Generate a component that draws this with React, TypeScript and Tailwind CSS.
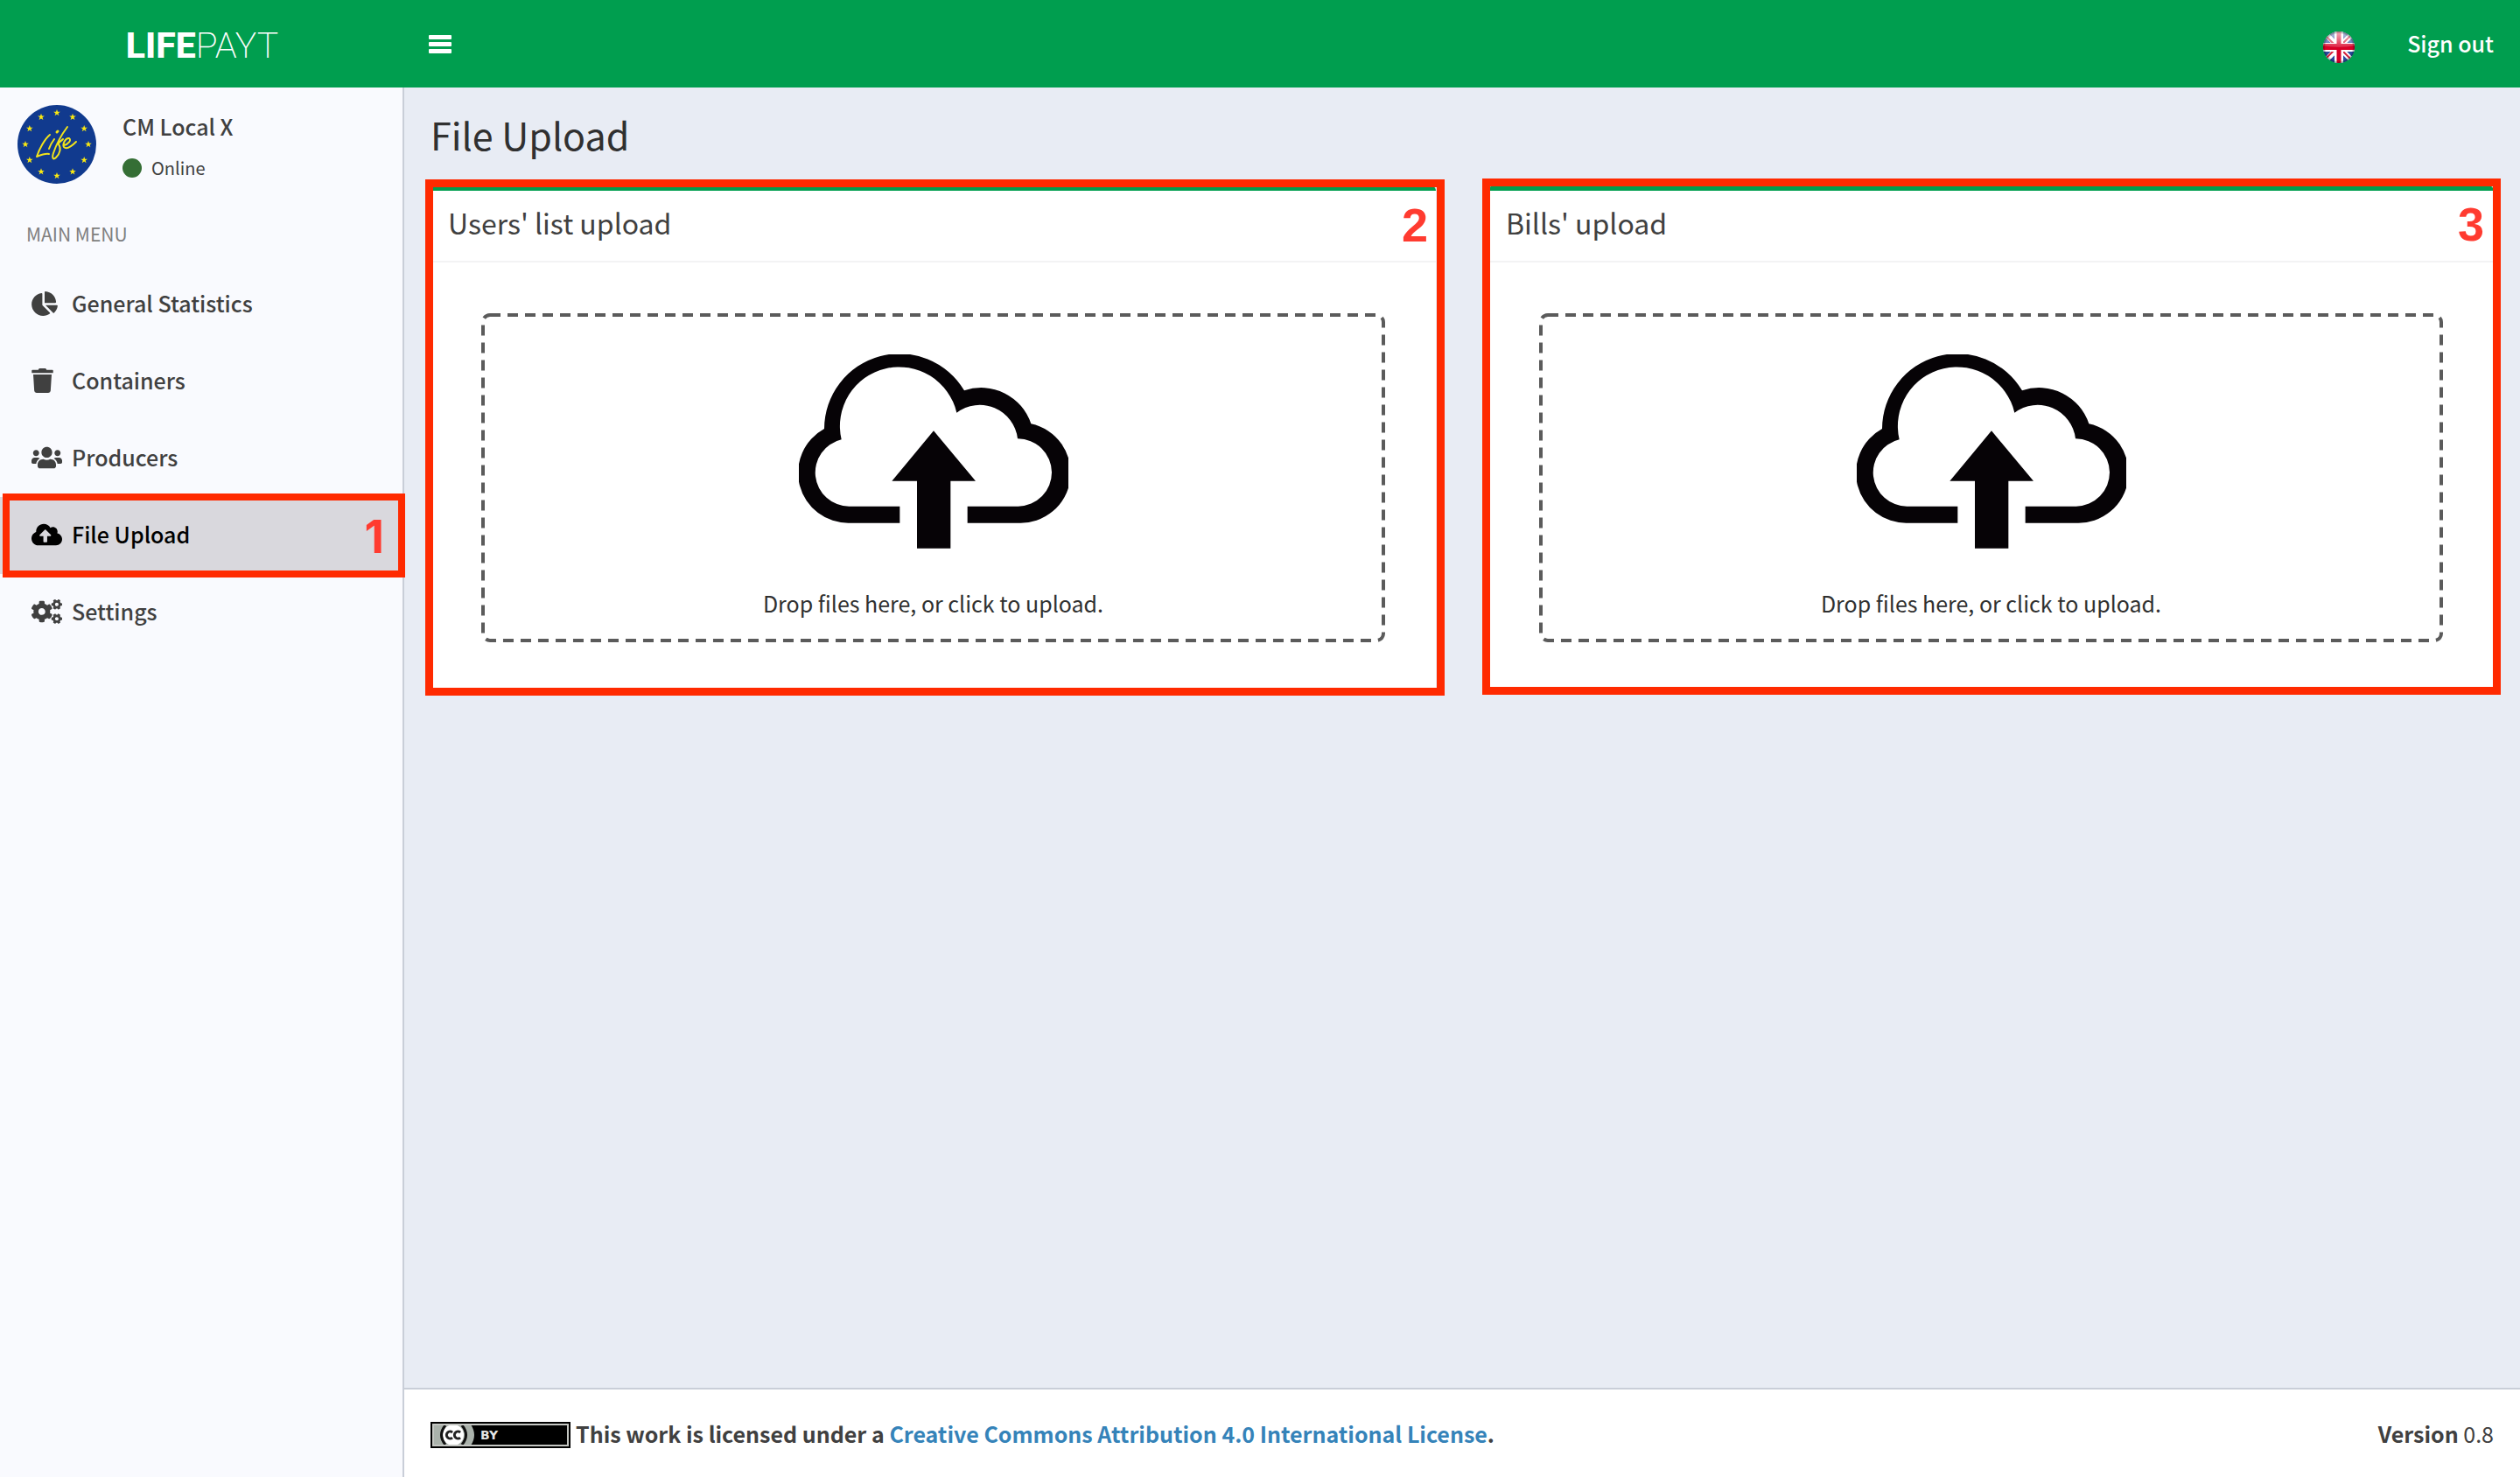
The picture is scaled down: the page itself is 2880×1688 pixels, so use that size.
import React from "react";
import type { IconType } from "react-icons";
import { FaChartPie, FaTrash, FaUsers, FaCloudUploadAlt, FaCogs } from "react-icons/fa";

type MenuItem = { label: string; icon: IconType; iconSize: string; active?: boolean };

const menu: MenuItem[] = [
  { label: "General Statistics", icon: FaChartPie, iconSize: "h-7 w-[30px]" },
  { label: "Containers", icon: FaTrash, iconSize: "h-7 w-[25px]" },
  { label: "Producers", icon: FaUsers, iconSize: "h-7 w-[35px]" },
  { label: "File Upload", icon: FaCloudUploadAlt, iconSize: "h-7 w-[35px]", active: true },
  { label: "Settings", icon: FaCogs, iconSize: "h-7 w-[35px]" },
];

const STAR =
  "M0 -4 L1 -1.2 L3.8 -1.2 L1.5 0.5 L2.4 3.2 L0 1.6 L-2.4 3.2 L-1.5 0.5 L-3.8 -1.2 L-1 -1.2 Z";

function LifeLogo() {
  return (
    <svg viewBox="0 0 90 90" className="size-[90px] shrink-0" role="img" aria-label="Life">
      <circle cx="45" cy="45" r="45" fill="#113a8e" />
      {Array.from({ length: 12 }, (_, i) => {
        const a = (i * Math.PI) / 6;
        return (
          <path
            key={i}
            d={STAR}
            fill="#fcea10"
            transform={`translate(${45 + 36 * Math.sin(a)} ${45 - 36 * Math.cos(a)})`}
          />
        );
      })}
      <g fill="none" stroke="#f3e41a" strokeWidth="2" strokeLinecap="round" strokeLinejoin="round">
        <path d="M37 34 C31 39 25 50 22 59 C27 57 32 55 36 56" />
        <path d="M42 39 C39 43 37 47 36 50" />
        <path d="M45 31 L46 30" strokeWidth="3" />
        <path d="M57 25 C51 33 44 46 41 55 C39 61 41 63 44 60 C49 55 50 49 47 45 C46 43 49 42 52 39" />
        <path d="M53 46 C58 45 62 40 59 38 C55 37 51 45 53 48 C56 51 62 47 67 42" />
      </g>
    </svg>
  );
}

function UkFlag() {
  return (
    <svg viewBox="0 0 36 36" className="size-9" role="img" aria-label="English">
      <defs>
        <clipPath id="flag-round">
          <circle cx="18" cy="18" r="18" />
        </clipPath>
        <linearGradient id="flag-gloss" x1="0" y1="0" x2="0" y2="1">
          <stop offset="0" stopColor="#fff" stopOpacity="0.7" />
          <stop offset="1" stopColor="#fff" stopOpacity="0.15" />
        </linearGradient>
        <radialGradient id="flag-shade">
          <stop offset="0.85" stopColor="#000" stopOpacity="0" />
          <stop offset="1" stopColor="#000" stopOpacity="0.4" />
        </radialGradient>
      </defs>
      <g clipPath="url(#flag-round)">
        <rect width="36" height="36" fill="#2b4ba0" />
        <path d="M0 0 L36 36 M36 0 L0 36" stroke="#fff" strokeWidth="6" />
        <path d="M0 2 L18 20 M36 0 L18 18 M18 18 L36 36 M0 34 L18 16" stroke="#d4213d" strokeWidth="2" />
        <path d="M18 0 V36 M0 18 H36" stroke="#fff" strokeWidth="10" />
        <path d="M18 0 V36 M0 18 H36" stroke="#d80027" strokeWidth="5" />
        <path d="M0 14 H36 V21 H0 Z" fill="#d80027" />
        <path d="M0 0 H36 V16 Q18 20 0 16 Z" fill="url(#flag-gloss)" />
        <circle cx="18" cy="18" r="18" fill="url(#flag-shade)" />
      </g>
    </svg>
  );
}

function CloudUpload() {
  return (
    <svg viewBox="156 135 924 666" className="h-[222px] w-[308px]" fill="#060306" aria-hidden="true">
      <path d="M502 713 H328 A172 172 0 0 1 243 390 A258 258 0 0 1 723 259 A180 180 0 0 1 952 373 A172 172 0 0 1 908 713 H734 V656 H908 A116 116 0 0 0 906 424 A131 131 0 0 0 697 335 A202 202 0 0 0 302 427 A116 116 0 0 0 328 656 H502 Z" />
      <path d="M618 397 L762 569 H676 V800 H561 V569 H475 Z" />
    </svg>
  );
}

function CcBadge() {
  return (
    <svg viewBox="0 0 160 30" className="mt-1 h-[30px] w-40 shrink-0" role="img" aria-label="Creative Commons License">
      <rect width="160" height="30" fill="#000" />
      <path d="M3 3 H46 Q54 15 46 27 H3 Z" fill="#aab2ab" />
      <circle cx="26" cy="15" r="12" fill="#fff" />
      <path d="M17 4 Q8 15 17 26 M36 4 Q45 15 36 26" fill="none" stroke="#111" strokeWidth="3" />
      <path
        d="M25 12 A4 4 0 1 0 25 18 M34 12 A4 4 0 1 0 34 18"
        fill="none"
        stroke="#222"
        strokeWidth="3"
      />
      <rect x="3" y="3" width="154" height="24" fill="none" stroke="#c4c6c2" strokeWidth="2" />
      <text x="57" y="20" fill="#e4e4e4" fontSize="14" fontFamily="'DejaVu Sans', sans-serif">
        BY
      </text>
    </svg>
  );
}

function UploadCard({ title, marker, frame }: { title: string; marker: number; frame: string }) {
  const id = `upload-${marker}`;
  return (
    <section className="relative min-w-0 flex-1 rounded-md border-t-6 border-[#009e4f] bg-white">
      <header className="flex h-[82px] items-center border-b-2 border-[#f3f3f4] px-5 pb-2">
        <h2 className="text-[32px] leading-10 text-[#404040]">{title}</h2>
      </header>
      <div className="p-[58px]">
        <label htmlFor={id} className="relative flex cursor-pointer flex-col items-center pt-[47px] pb-[25px]">
          <svg className="absolute inset-0 size-full" fill="none" aria-hidden="true">
            <rect
              x="2"
              y="2"
              rx="8"
              className="h-[calc(100%-4px)] w-[calc(100%-4px)]"
              stroke="#5b5b5b"
              strokeWidth="4"
              strokeDasharray="12 8"
            />
          </svg>
          <CloudUpload />
          <span className="mt-[42px] text-[25px] leading-10 text-[#303030]">
            Drop files here, or click to upload.
          </span>
          <input id={id} type="file" className="sr-only" />
        </label>
      </div>
      <div
        className={`pointer-events-none absolute flex items-start justify-end border-9 border-[#ff2a00] pt-4 pr-2.5 ${frame}`}
      >
        <span className="font-['Liberation_Sans',sans-serif] text-[54px] leading-none font-bold text-[#ff3b30]">
          {marker}
        </span>
      </div>
    </section>
  );
}

export default function App() {
  return (
    <div className="flex min-h-screen flex-col bg-[#e8ecf4] font-['Noto_Sans_CJK_SC','Open_Sans',sans-serif] text-[25px] text-[#404040]">
      <header className="flex h-[100px] items-center bg-[#009e4f] text-white">
        <a href="#" className="flex w-[462px] justify-center pt-1 font-[Roboto,sans-serif] text-[41px] leading-none">
          <span className="font-extrabold">LIFE</span>
          <span className="font-extralight">PAYT</span>
        </a>
        <button type="button" aria-label="Toggle navigation" className="px-7">
          <svg viewBox="0 0 26 21" className="h-[21px] w-[26px]" fill="currentColor" aria-hidden="true">
            <rect width="26" height="5" rx="1" />
            <rect y="8" width="26" height="5" rx="1" />
            <rect y="16" width="26" height="5" rx="1" />
          </svg>
        </button>
        <nav className="ml-auto flex items-center gap-[60px] pr-[30px]">
          <button type="button" className="pt-2">
            <UkFlag />
          </button>
          <a href="#" className="font-medium">
            Sign out
          </a>
        </nav>
      </header>

      <div className="flex flex-1">
        <aside className="w-[462px] shrink-0 border-r-2 border-[#c9ced8] bg-[#f9fafe]">
          <div className="flex gap-[30px] px-5 pt-5 pb-[18px]">
            <LifeLogo />
            <div className="pt-1">
              <p className="leading-10 font-medium">CM Local X</p>
              <p className="mt-2 flex items-center gap-[11px] text-xl leading-10">
                <span className="size-[22px] rounded-full bg-[#356e35]" />
                Online
              </p>
            </div>
          </div>
          <h2 className="px-[30px] py-5 text-[21px] leading-[34px] text-[#7f7f80]">MAIN MENU</h2>
          <nav>
            {menu.map(({ label, icon: Icon, iconSize, active }) => (
              <a
                key={label}
                href="#"
                className={
                  active
                    ? "relative flex h-[88px] items-center bg-[#d9d8dd] pb-0.5 pl-9 font-medium text-black"
                    : "flex h-[88px] items-center pb-0.5 pl-9 font-medium"
                }
              >
                <span className="w-[46px]">
                  <Icon className={iconSize} />
                </span>
                {label}
                {active && (
                  <span className="absolute -top-1 -right-[3px] -bottom-1 left-[3px] flex items-center justify-end border-8 border-[#ff2a00] pt-1 pr-4 font-[Inter,sans-serif] text-[52px] leading-none font-bold text-[#ff3b30]">
                    1
                  </span>
                )}
              </a>
            ))}
          </nav>
        </aside>

        <div className="flex min-w-0 flex-1 flex-col">
          <main className="flex-1 px-[30px]">
            <h1 className="pt-[27px] pb-[33px] text-[43px] leading-[52px] text-[#303030]">File Upload</h1>
            <div className="flex gap-[60px]">
              <UploadCard
                title="Users' list upload"
                marker={2}
                frame="-top-[13px] -right-[10px] -bottom-[3px] -left-[6px]"
              />
              <UploadCard
                title="Bills' upload"
                marker={3}
                frame="-top-[14px] -right-[8px] -bottom-[2px] -left-[7px]"
              />
            </div>
          </main>
          <footer className="flex items-center justify-between border-t-2 border-[#c9ced8] bg-white p-[30px] leading-10">
            <div className="flex items-center gap-1.5 font-bold">
              <CcBadge />
              <p>
                This work is licensed under a{" "}
                <a href="#" className="text-[#3583b9]">
                  Creative Commons Attribution 4.0 International License
                </a>
                .
              </p>
            </div>
            <p>
              <b>Version</b> 0.8
            </p>
          </footer>
        </div>
      </div>
    </div>
  );
}
